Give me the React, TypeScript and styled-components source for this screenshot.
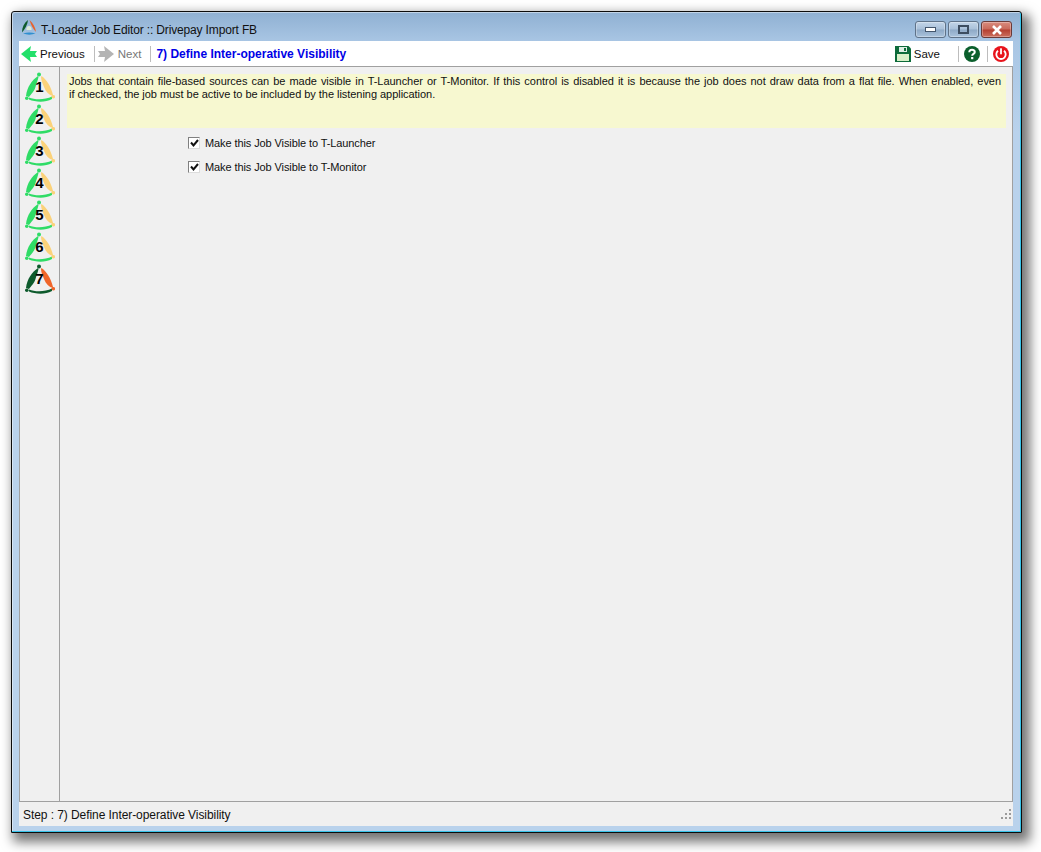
import { createGlobalStyle } from "styled-components";
import styled from "styled-components";

const GlobalStyle = createGlobalStyle`
	html, body {
		margin: 0;
		padding: 0;
		background: #ffffff;
		width: 1041px;
		height: 852px;
		overflow: hidden;
	}
`;

const FONT = `"Liberation Sans", Arial, sans-serif`;

const Page = styled.div`
	width: 1041px;
	height: 852px;
	box-sizing: border-box;
	padding: 11px 19px 19px 11px;
	font-family: ${FONT};
`;

const Window = styled.div`
	width: 100%;
	height: 100%;
	box-sizing: border-box;
	display: flex;
	flex-direction: column;
	border: 1px solid #0c0c0c;
	border-radius: 3px 3px 0 0;
	padding: 0 8px 6px 7px;
	background: linear-gradient(180deg, #8fb0d2 0, #a9c6e4 30px, #b9d2ec 120px, #b9d2ec 100%);
	box-shadow: 5px 6px 12px 3px rgba(0, 0, 0, 0.55), inset -1px -1px 0 #38c4ea, inset 1px 1px 0 rgba(255, 255, 255, 0.45);
`;

const TitleBar = styled.div`
	height: 29px;
	flex: none;
	display: flex;
	align-items: center;
	padding-left: 2px;
	gap: 4px;
`;

const Title = styled.div`
	font-size: 12px;
	letter-spacing: -0.15px;
	color: #111;
	flex: 1;
	padding-top: 7px;
`;

const Controls = styled.div`
	display: flex;
	gap: 2px;
	align-self: flex-start;
	margin: 9px 1px 0 0;
`;

const ControlButton = styled.div<{ $close?: boolean }>`
	width: 31px;
	height: 17px;
	box-sizing: border-box;
	display: flex;
	align-items: center;
	justify-content: center;
	border: 1px solid ${(p) => (p.$close ? "#6a3a38" : "#5f7288")};
	border-radius: 3px;
	background: ${(p) =>
		p.$close
			? "linear-gradient(180deg, #d98c7e 0, #c9695a 48%, #b43f30 52%, #cc6f5e 100%)"
			: "linear-gradient(180deg, #c3d5e8 0, #a9c0d9 48%, #8ea9c6 52%, #aac3dc 100%)"};
	box-shadow: inset 0 0 0 1px rgba(255, 255, 255, 0.3);
`;

const Toolbar = styled.div`
	height: 25px;
	flex: none;
	background: #fff;
	display: flex;
	align-items: center;
	padding: 0 4px 0 2px;
	font-size: 11.5px;
`;

const ToolItem = styled.div<{ $disabled?: boolean }>`
	display: flex;
	align-items: center;
	gap: ${(p) => (p.$disabled ? 4 : 3)}px;
	color: ${(p) => (p.$disabled ? "#777" : "#111")};
`;

const ToolDivider = styled.div<{ $left?: number; $right?: number }>`
	width: 1px;
	height: 16px;
	background: #bdbdbd;
	margin: 0 ${(p) => p.$right ?? 3}px 0 ${(p) => p.$left ?? 9}px;
`;

const StepHeading = styled.div`
	color: #0000e6;
	font-weight: 700;
	flex: 1;
	font-size: 12px;
`;

const Body = styled.div`
	flex: 1;
	min-height: 0;
	display: flex;
	background: #f0f0f0;
	border: 1px solid #a0a0a0;
`;

const StepRail = styled.div`
	width: 40px;
	flex: none;
	box-sizing: border-box;
	border-right: 1px solid #a0a0a0;
	padding: 5px 0 0 5px;
	display: flex;
	flex-direction: column;
`;

const StepIcon = styled.div`
	position: relative;
	width: 30px;
	height: 32px;
`;

const StepNumber = styled.span`
	position: absolute;
	left: 0;
	right: 1px;
	top: 7px;
	text-align: center;
	font: 700 15px/16px ${FONT};
	color: #000;
`;

const Main = styled.div`
	flex: 1;
	min-width: 0;
	padding: 7px 6px 0 7px;
	display: flex;
	flex-direction: column;
`;

const Notice = styled.div`
	height: 54px;
	box-sizing: border-box;
	background: #f7f8d0;
	padding: 1px 5px 0 2px;
	font-size: 11px;
	line-height: 13px;
	letter-spacing: -0.04px;
	color: #111;
`;

const NoticeLine = styled.div<{ $full?: boolean }>`
	text-align-last: ${(p) => (p.$full ? "justify" : "left")};
`;

const Options = styled.div`
	padding: 3px 0 0 121px;
	display: flex;
	flex-direction: column;
`;

const CheckRow = styled.label`
	height: 24px;
	display: flex;
	align-items: center;
	gap: 5px;
	font-size: 11px;
	letter-spacing: -0.1px;
	color: #111;
`;

const CheckBox = styled.span`
	width: 12px;
	height: 12px;
	box-sizing: border-box;
	border: 1px solid #808080;
	border-right-color: #dcdcdc;
	border-bottom-color: #dcdcdc;
	background: #fff;
	display: flex;
	align-items: center;
	justify-content: center;
`;

const StatusBar = styled.div`
	height: 24px;
	flex: none;
	box-sizing: border-box;
	background: #f0f0f0;
	display: flex;
	align-items: center;
	justify-content: space-between;
	padding: 1px 1px 0 4px;
	font-size: 12px;
	letter-spacing: -0.07px;
	color: #111;
`;

const Logo = ({ done }: { done?: boolean }) => {
	const left = done ? "#0d5a2c" : "#2fdc66";
	const right = done ? "#f0662a" : "#fbd27a";
	return (
		<svg width="30" height="32" viewBox="0 0 30 32">
			<path d="M13 4 C7 8 2 15 1 24 L4 25 C6 22 9 20 10.500 15 C11.500 11 13 8 13.500 5Z" fill={left} />
			<path d="M16.500 4 C21 7 26 14 28 23 L28 24 C24 23 21 20 19 15 C17.500 11 16 8 16 5Z" fill={right} />
			<path d="M4 25.500 C10 28 20 28 27 24.500 L27 27 C20 31 10 30 4 27.500Z" fill={left} />
			<circle cx="14" cy="2.500" r="2" fill={left} />
			<circle cx="1.800" cy="26.300" r="1.800" fill={left} />
			<circle cx="28.300" cy="24.700" r="1.800" fill={right} />
		</svg>
	);
};

const TitleLogo = () => (
	<svg width="16" height="16" viewBox="0 0 32 32">
		<path d="M14 2 C13 12 8 20 2 27 C2 17 6 8 14 2Z" fill="#0d5a2c" />
		<path d="M17 2 C24 8 29 17 30 26 C24 20 20 12 17 2Z" fill="#e8622c" />
		<path d="M4 29 C12 26 21 26 29 29 C21 32 12 32 4 29Z" fill="#2f8fd0" />
		<path d="M16 14 C20 14 22 18 21 22 L11 22 C10 18 12 14 16 14Z" fill="#dde9d8" />
	</svg>
);

const Arrow = ({ color, flip }: { color: string; flip?: boolean }) => (
	<svg width="16" height="16" viewBox="0 0 16 16" style={flip ? { transform: "scaleX(-1)" } : undefined}>
		<path d="M0 8 L10 0 L9 5 L16 5 L14 8 L16 11 L9 11 L10 16Z" fill={color} />
	</svg>
);

const Disk = () => (
	<svg width="16" height="16" viewBox="0 0 16 16">
		<path d="M0 0 H13.500 L16 2.500 V16 H0Z" fill="#0d6b3a" />
		<rect x="4" y="1" width="8" height="5" fill="#dfeee5" />
		<rect x="9" y="2" width="2" height="3" fill="#0d6b3a" />
		<rect x="2" y="8" width="12" height="7" fill="#d8efc8" />
	</svg>
);

const Help = () => (
	<svg width="16" height="16" viewBox="0 0 16 16">
		<circle cx="8" cy="8" r="8" fill="#0b5f2c" />
		<path d="M5.300 6.200 C5.300 3 10.800 3 10.800 6 C10.800 8 8.200 7.800 8.200 9.800" fill="none" stroke="#fff" strokeWidth="2" />
		<rect x="7.100" y="11" width="2.200" height="2.200" fill="#fff" />
	</svg>
);

const Power = () => (
	<svg width="16" height="16" viewBox="0 0 16 16">
		<circle cx="8" cy="8" r="8" fill="#e8141c" />
		<path d="M5 4.700 A4.700 4.700 0 1 0 11 4.700" fill="none" stroke="#fff" strokeWidth="1.800" />
		<rect x="7.100" y="2.300" width="1.800" height="6" fill="#fff" />
	</svg>
);

const Check = () => (
	<svg width="9" height="9" viewBox="0 0 9 9">
		<path d="M1 3.500 L3.500 6.500 L8 1" fill="none" stroke="#111" strokeWidth="2" />
	</svg>
);

const Grip = () => (
	<svg width="11" height="11" viewBox="0 0 11 11" fill="#9a9a9a">
		<rect x="8" y="0" width="2" height="2" />
		<rect x="4" y="4" width="2" height="2" />
		<rect x="8" y="4" width="2" height="2" />
		<rect x="0" y="8" width="2" height="2" />
		<rect x="4" y="8" width="2" height="2" />
		<rect x="8" y="8" width="2" height="2" />
	</svg>
);

const STEPS = [1, 2, 3, 4, 5, 6, 7];

const App = () => {
	return (
		<Page>
			<GlobalStyle />
			<Window>
				<TitleBar>
					<TitleLogo />
					<Title>T-Loader Job Editor :: Drivepay Import FB</Title>
					<Controls>
						<ControlButton>
							<svg width="11" height="5" viewBox="0 0 11 5">
								<rect x="0.500" y="0.500" width="10" height="4" fill="#fff" stroke="#44566c" />
							</svg>
						</ControlButton>
						<ControlButton>
							<svg width="11" height="9" viewBox="0 0 11 9">
								<rect x="1" y="1" width="9" height="7" fill="none" stroke="#3d4d60" strokeWidth="2" />
							</svg>
						</ControlButton>
						<ControlButton $close>
							<svg width="12" height="10" viewBox="0 0 12 10">
								<path d="M2 1 L10 9 M10 1 L2 9" stroke="#fff" strokeWidth="2.600" />
							</svg>
						</ControlButton>
					</Controls>
				</TitleBar>
				<Toolbar>
					<ToolItem>
						<Arrow color="#22e06a" />
						Previous
					</ToolItem>
					<ToolDivider />
					<ToolItem $disabled>
						<Arrow color="#b4b4b4" flip />
						Next
					</ToolItem>
					<ToolDivider $right={5} />
					<StepHeading>7) Define Inter-operative Visibility</StepHeading>
					<ToolItem>
						<Disk />
						Save
					</ToolItem>
					<ToolDivider $left={18} $right={5} />
					<Help />
					<ToolDivider $left={7} $right={5} />
					<Power />
				</Toolbar>
				<Body>
					<StepRail>
						{STEPS.map((n) => (
							<StepIcon key={n}>
								<Logo done={n === 7} />
								<StepNumber>{n}</StepNumber>
							</StepIcon>
						))}
					</StepRail>
					<Main>
						<Notice>
							<NoticeLine $full>
								Jobs that contain file-based sources can be made visible in T-Launcher or T-Monitor. If this control is
								disabled it is because the job does not draw data from a flat file. When enabled, even
							</NoticeLine>
							<NoticeLine>if checked, the job must be active to be included by the listening application.</NoticeLine>
						</Notice>
						<Options>
							<CheckRow>
								<CheckBox>
									<Check />
								</CheckBox>
								Make this Job Visible to T-Launcher
							</CheckRow>
							<CheckRow>
								<CheckBox>
									<Check />
								</CheckBox>
								Make this Job Visible to T-Monitor
							</CheckRow>
						</Options>
					</Main>
				</Body>
				<StatusBar>
					Step : 7) Define Inter-operative Visibility
					<Grip />
				</StatusBar>
			</Window>
		</Page>
	);
};

export default App;
